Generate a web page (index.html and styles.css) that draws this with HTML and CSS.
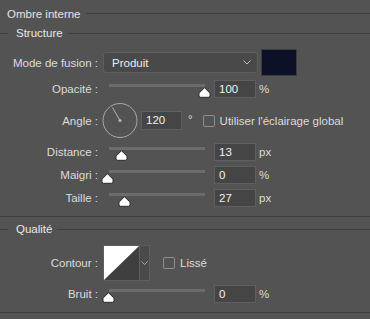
FILE: index.html
```html
<!DOCTYPE html>
<html lang="fr">
<head>
<meta charset="UTF-8" />
<title>Ombre interne</title>
<link rel="stylesheet" href="styles.css">
</head>
<body>
<div class="panel">
  <div class="panel-title"><span>Ombre interne</span></div>

  <!-- Structure -->
  <div class="group">
    <div class="legend"><span>Structure</span></div>

    <div class="row row-mode">
      <label class="label">Mode de fusion :</label>
      <div class="select">
        <span>Produit</span>
        <svg class="chevron" width="8" height="5" viewBox="0 0 8 5"><path d="M0.5 0.5 L4 4 L7.5 0.5" fill="none" stroke="#bdbdbd" stroke-width="1"/></svg>
      </div>
      <div class="swatch"></div>
    </div>

    <div class="row row-slider row-opacity">
      <label class="label">Opacité :</label>
      <div class="slider">
        <div class="track"></div>
        <svg class="thumb" style="left: 89px" width="13" height="11" viewBox="0 0 13 11"><path d="M6.5 0.7 L12 6.2 L12 8.6 Q12 10.3 10.3 10.3 L2.7 10.3 Q1 10.3 1 8.6 L1 6.2 Z" fill="#fff" stroke="#2a2a2a" stroke-width="1"/></svg>
      </div>
      <div class="field">100</div>
      <span class="unit">%</span>
    </div>

    <div class="row row-angle">
      <label class="label">Angle :</label>
      <svg class="dial" width="36" height="35" viewBox="0 0 36 35">
        <circle cx="18" cy="17.5" r="17" fill="none" stroke="#a9a9a9" stroke-width="1"/>
        <line x1="18" y1="17.5" x2="10.5" y2="4.5" stroke="#b5b5b5" stroke-width="1"/>
        <circle cx="18" cy="17.5" r="1.6" fill="#b5b5b5"/>
      </svg>
      <div class="field field-angle">120</div>
      <span class="degree">°</span>
      <span class="checkbox"></span>
      <span class="check-label">Utiliser l'éclairage global</span>
    </div>

    <div class="row row-slider">
      <label class="label">Distance :</label>
      <div class="slider">
        <div class="track"></div>
        <svg class="thumb" style="left: 6px" width="13" height="11" viewBox="0 0 13 11"><path d="M6.5 0.7 L12 6.2 L12 8.6 Q12 10.3 10.3 10.3 L2.7 10.3 Q1 10.3 1 8.6 L1 6.2 Z" fill="#fff" stroke="#2a2a2a" stroke-width="1"/></svg>
      </div>
      <div class="field">13</div>
      <span class="unit">px</span>
    </div>

    <div class="row row-slider">
      <label class="label">Maigri :</label>
      <div class="slider">
        <div class="track"></div>
        <svg class="thumb" style="left: -8px" width="13" height="11" viewBox="0 0 13 11"><path d="M6.5 0.7 L12 6.2 L12 8.6 Q12 10.3 10.3 10.3 L2.7 10.3 Q1 10.3 1 8.6 L1 6.2 Z" fill="#fff" stroke="#2a2a2a" stroke-width="1"/></svg>
      </div>
      <div class="field">0</div>
      <span class="unit">%</span>
    </div>

    <div class="row row-slider">
      <label class="label">Taille :</label>
      <div class="slider">
        <div class="track"></div>
        <svg class="thumb" style="left: 9px" width="13" height="11" viewBox="0 0 13 11"><path d="M6.5 0.7 L12 6.2 L12 8.6 Q12 10.3 10.3 10.3 L2.7 10.3 Q1 10.3 1 8.6 L1 6.2 Z" fill="#fff" stroke="#2a2a2a" stroke-width="1"/></svg>
      </div>
      <div class="field">27</div>
      <span class="unit">px</span>
    </div>
  </div>

  <!-- Qualité -->
  <div class="group group-quality">
    <div class="legend"><span>Qualité</span></div>

    <div class="row row-contour">
      <label class="label">Contour :</label>
      <div class="contour">
        <svg class="curve" width="35" height="34" viewBox="0 0 35 34">
          <rect width="35" height="34" fill="#3f3f3f"/>
          <polygon points="0,0 35,0 0,34" fill="#ffffff"/>
        </svg>
        <div class="contour-arrow">
          <svg width="7" height="4" viewBox="0 0 7 4"><path d="M0.5 0.5 L3.5 3.5 L6.5 0.5" fill="none" stroke="#a5a5a5" stroke-width="1"/></svg>
        </div>
      </div>
      <span class="checkbox checkbox-smooth"></span>
      <span class="check-label">Lissé</span>
    </div>

    <div class="row row-slider row-noise">
      <label class="label">Bruit :</label>
      <div class="slider">
        <div class="track"></div>
        <svg class="thumb" style="left: -7px" width="13" height="11" viewBox="0 0 13 11"><path d="M6.5 0.7 L12 6.2 L12 8.6 Q12 10.3 10.3 10.3 L2.7 10.3 Q1 10.3 1 8.6 L1 6.2 Z" fill="#fff" stroke="#2a2a2a" stroke-width="1"/></svg>
      </div>
      <div class="field">0</div>
      <span class="unit">%</span>
    </div>
  </div>
</div>
</body>
</html>
```

FILE: styles.css
```css
body {
  margin: 0;
  background: #535353;
  font-family: "Liberation Sans", Arial, sans-serif;
  font-size: 11.5px;
  color: #dcdcdc;
  overflow: hidden;
}
.panel {
  width: 370px;
}
.panel-title {
  height: 27px;
  display: flex;
  align-items: center;
  padding-left: 7px;
  color: #e4e4e4;
}
.panel-title::after {
  content: "";
  flex: 1;
  height: 1px;
  background: #3e3e3e;
  margin-left: 5px;
}
.group {
  border-bottom: 1px solid #3e3e3e;
  padding-bottom: 9px;
}
.legend {
  height: 12px;
  display: flex;
  align-items: center;
  color: #e8e8e8;
}
.legend::before {
  content: "";
  width: 8px;
  height: 1px;
  background: #3e3e3e;
  margin-right: 8px;
}
.legend::after {
  content: "";
  flex: 1;
  height: 1px;
  background: #3e3e3e;
  margin-left: 5px;
}
.row {
  display: flex;
  align-items: center;
  margin-top: 5px;
}
.label {
  width: 98px;
  flex: none;
  text-align: right;
  white-space: nowrap;
}
.row-mode {
  height: 27px;
  margin-top: 10px;
}
.select {
  margin-left: 5px;
  width: 155px;
  height: 21px;
  box-sizing: border-box;
  border: 1px solid #5e5e5e;
  border-radius: 3px;
  background: #494949;
  display: flex;
  align-items: center;
  padding: 0 6px 0 8px;
  color: #ececec;
}
.select span {
  flex: 1;
}
.swatch {
  margin-left: 3px;
  width: 36px;
  height: 27px;
  box-sizing: border-box;
  border: 1px solid #3c3c3c;
  background: #0c1127;
}
.row-slider {
  height: 18px;
}
.row-opacity {
  margin-top: 4px;
}
.slider {
  position: relative;
  margin-left: 11px;
  width: 96px;
  height: 18px;
}
.track {
  margin-top: 4px;
  height: 3px;
  background: #6c6c6c;
}
.thumb {
  position: absolute;
  top: 7px;
}
.field {
  margin-left: 9px;
  width: 42px;
  height: 18px;
  box-sizing: border-box;
  border: 1px solid #5f5f5f;
  background: #454545;
  color: #f2f2f2;
  padding-left: 4px;
  line-height: 16px;
}
.unit {
  margin-left: 3px;
}
.row-angle {
  height: 35px;
}
.dial {
  margin-left: 4px;
}
.field-angle {
  margin-left: 3px;
  width: 41px;
  height: 19px;
  line-height: 17px;
}
.degree {
  margin-left: 6px;
  margin-top: -3px;
}
.checkbox {
  margin-left: 10px;
  width: 12px;
  height: 12px;
  box-sizing: border-box;
  border: 1px solid #8e8e8e;
  border-radius: 2px;
}
.check-label {
  margin-left: 5px;
  white-space: nowrap;
}
.group-quality .legend {
  margin-top: 6px;
}
.row-contour {
  height: 36px;
  margin-top: 10px;
}
.contour {
  margin-left: 5px;
  display: flex;
  width: 47px;
  height: 36px;
  box-sizing: border-box;
  border: 1px solid #5e5e5e;
}
.curve {
  display: block;
}
.contour-arrow {
  flex: 1;
  border-left: 1px solid #5e5e5e;
  background: #4a4a4a;
  display: flex;
  align-items: center;
  justify-content: center;
}
.checkbox-smooth {
  margin-left: 13px;
}
.row-noise {
  margin-top: 4px;
}
```
